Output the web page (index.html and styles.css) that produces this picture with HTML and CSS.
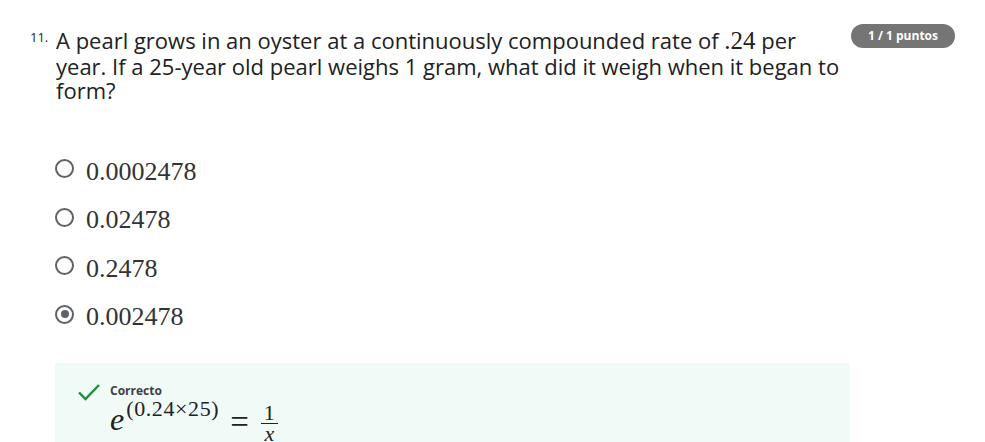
FILE: index.html
```html
<!DOCTYPE html>
<html lang="es">
<head>
<meta charset="utf-8">
<link rel="stylesheet" href="styles.css">
</head>
<body>
<div class="item">
  <div class="header">
    <span class="num">11.</span>
    <div class="qtext">A pearl grows in an oyster at a continuously compounded rate of <span class="m">.24</span> per year. If a 25-year old pearl weighs 1 gram, what did it weigh when it began to form?</div>
    <span class="badge">1 / 1 puntos</span>
  </div>
  <ul class="options">
    <li class="opt"><span class="radio"></span><span class="m val">0.0002478</span></li>
    <li class="opt"><span class="radio"></span><span class="m val">0.02478</span></li>
    <li class="opt"><span class="radio"></span><span class="m val">0.2478</span></li>
    <li class="opt"><span class="radio checked"></span><span class="m val">0.002478</span></li>
  </ul>
  <div class="feedback">
    <svg class="check" width="24" height="18" viewBox="0 0 24 18"><path d="M2 9.5 L8.5 16 L22 2" fill="none" stroke="#1e8e3e" stroke-width="2.4"/></svg>
    <div class="fb-body">
      <div class="fb-title">Correcto</div>
      <div class="formula m"><span class="e">e</span><span class="sup">(0.24×25)</span><span class="eq">=</span><span class="frac"><span class="fn">1</span><span class="fd">x</span></span></div>
    </div>
  </div>
</div>
</body>
</html>
```

FILE: styles.css
```css
html, body { margin: 0; padding: 0; background: #fff; }
body { font-family: "Open Sans", sans-serif; color: #202124; }
.item { padding: 24px 30px 0 30px; width: 925px; }
.header { display: flex; align-items: flex-start; }
.num { font-size: 13px; width: 26px; padding-top: 5px; line-height: 16px; }
.qtext { width: 792px; font-size: 22px; line-height: 24.5px; padding-top: 4px; color: #202124; }
.m { font-family: "Liberation Serif", "DejaVu Serif", serif; }
.qtext .m { font-size: 25px; }
.badge { margin-left: auto; background: #757575; color: #fff; font-weight: 700; font-size: 12px; height: 24px; line-height: 24px; padding: 0 17px; border-radius: 12px; white-space: nowrap; }
.options { list-style: none; margin: 42px 0 0 0; padding: 0 0 0 25px; }
.opt { display: flex; align-items: center; height: 48.5px; }
.radio { width: 15px; height: 15px; border: 2px solid #5f6368; border-radius: 50%; box-sizing: content-box; margin-right: 12px; position: relative; flex: none; }
.radio.checked::after { content: ""; position: absolute; left: 3.5px; top: 3.5px; width: 8px; height: 8px; border-radius: 50%; background: #5f6368; }
.val { font-size: 26px; color: #333; padding-top: 6px; }
.feedback { margin: 24px 0 0 25px; width: 795px; height: 90px; background: #f0faf6; display: flex; padding: 20px 0 0 22px; box-sizing: border-box; }
.check { flex: none; }
.fb-body { margin-left: 9px; }
.fb-title { font-size: 12px; font-weight: 700; color: #3c4043; line-height: 16px; padding-top: 0px; }
.formula { color: #222; line-height: 32px; margin-top: -6px; white-space: nowrap; }
.e { font-style: italic; font-size: 32px; }
.sup { font-size: 22px; letter-spacing: 0.6px; margin-left: 2px; vertical-align: 14px; }
.eq { font-size: 33px; margin: 0 12px 0 11px; vertical-align: -3px; }
.frac { display: inline-flex; flex-direction: column; align-items: center; font-size: 22px; vertical-align: 10px; }
.fn { border-bottom: 1px solid #222; padding: 0 3px; line-height: 20px; }
.fd { font-style: italic; line-height: 20px; }
```
